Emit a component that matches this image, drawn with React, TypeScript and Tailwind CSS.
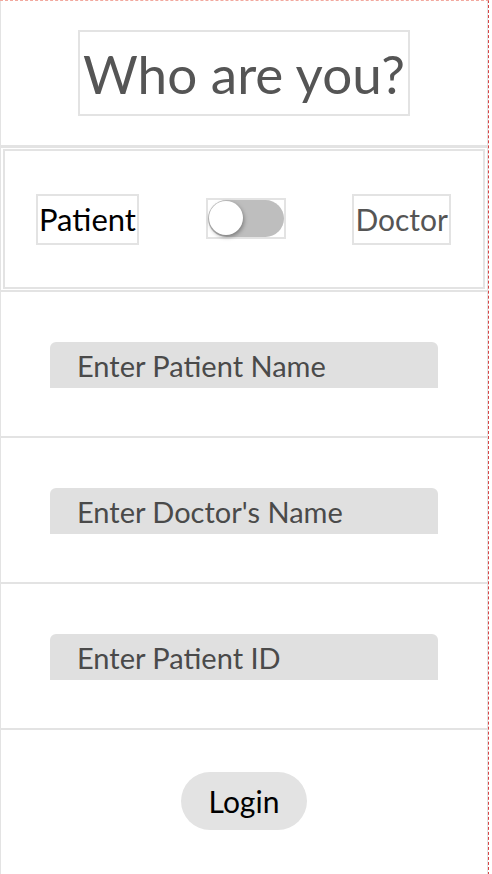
import React from "react";

const font = { fontFamily: "Lato, 'Open Sans', sans-serif" };

function InputRow({ label }: { label: string }) {
  return (
    <div className="h-[146px] border border-[#e3e3e3] flex items-center justify-start pl-[49px] pt-[2px]">
      <div className="w-[388px] h-[46px] bg-[#e0e0e0] rounded-t-[6px] flex items-center pl-[27px] text-[29px] text-[#4a4a4a] leading-none">
        {label}
      </div>
    </div>
  );
}

export default function App() {
  return (
    <div className="w-[492px] h-[874px] bg-white overflow-hidden" style={font}>
      <div className="w-[489px] border-t border-r border-dashed border-t-[#f2a89e] border-r-[#d64545]">
        <div className="w-[488px]">
          <div className="h-[146px] border-x border-b-2 border-[#e3e3e3] flex items-center justify-center">
            <div className="border-2 border-[#e3e3e3] px-[3px] h-[86px] flex items-center text-[53px] text-[#555555] leading-none">
              Who are you?
            </div>
          </div>
          <div className="h-[144px] pt-[1px] pb-[1px] px-[2px] border border-[#e3e3e3]">
            <div className="h-full border-2 border-[#e3e3e3] flex items-center justify-between pl-[31px] pr-[32px]">
              <div className="border-2 border-[#e3e3e3] h-[51px] flex items-center px-[1px] text-[31px] text-black leading-none">
                Patient
              </div>
              <div className="border-2 border-[#e3e3e3] w-[80px] h-[41px] flex items-center justify-center mt-[-2px]">
                <div className="relative w-[76px] h-[37px] rounded-full bg-[#bebebe]">
                  <div className="absolute left-[1px] top-[1px] w-[34px] h-[34px] rounded-full bg-white shadow-[1px_2px_4px_rgba(0,0,0,0.35)]" />
                </div>
              </div>
              <div className="border-2 border-[#e3e3e3] h-[51px] flex items-center px-[1px] text-[30px] text-[#555555] leading-none">
                Doctor
              </div>
            </div>
          </div>
          <InputRow label="Enter Patient Name" />
          <InputRow label="Enter Doctor's Name" />
          <InputRow label="Enter Patient ID" />
          <div className="h-[146px] border border-[#e3e3e3] flex items-center justify-center pb-[2px]">
            <button className="w-[126px] h-[58px] rounded-full bg-[#e3e3e3] text-[30px] text-black leading-none">
              Login
            </button>
          </div>
        </div>
      </div>
    </div>
  );
}
